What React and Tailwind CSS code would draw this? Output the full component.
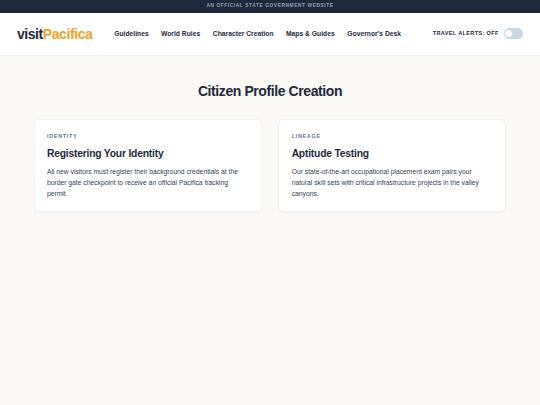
const links = [
  { label: 'Guidelines', width: 'w-[34.3px]' },
  { label: 'World Rules', width: 'w-[39.3px]' },
  { label: 'Character Creation', width: 'w-[60.7px]' },
  { label: 'Maps & Guides', width: 'w-[48.8px]' },
  { label: "Governor's Desk", width: 'w-[54px]' },
];

const cards = [
  {
    tag: 'Identity',
    title: 'Registering Your Identity',
    lines: [
      'All new visitors must register their background credentials at the',
      'border gate checkpoint to receive an official Pacifica tracking',
      'permit.',
    ],
  },
  {
    tag: 'Lineage',
    title: 'Aptitude Testing',
    lines: [
      'Our state-of-the-art occupational placement exam pairs your',
      'natural skill sets with critical infrastructure projects in the valley',
      'canyons.',
    ],
  },
];

function Card({ tag, title, lines }) {
  return (
    <article className="h-[92.5px] rounded-[5px] border border-[#f1f3f5] bg-white px-[12.2px] pt-[12px] shadow-[0_1px_2px_rgba(0,0,0,0.05)]">
      <p className="text-[5.4px] leading-[8px] font-bold tracking-[0.74px] text-[#64748b] uppercase">{tag}</p>
      <h2 className="mt-[6.4px] text-[10.3px] leading-[13px] font-bold tracking-[-0.2px]">{title}</h2>
      <p className="mt-[7.3px] text-[6.75px] leading-[10.8px] whitespace-nowrap text-[#334155]">
        {lines.map((line) => (
          <span key={line} className="block">{line}</span>
        ))}
      </p>
    </article>
  );
}

export default function App() {
  return (
    <div className="flex h-screen flex-col overflow-hidden bg-[#faf9f5] font-['Liberation_Sans',Arial,sans-serif] text-[#1e293b]">
      <div className="flex h-[12.66px] shrink-0 items-center justify-center bg-[#1e293b] pt-[1px] text-[4.8px] leading-none font-bold tracking-[0.6px] text-[#94a3b8] uppercase">
        An Official State Government Website
      </div>
      <header className="flex h-[43px] shrink-0 items-center border-b border-[#eef0f2] bg-white px-[16.9px]">
        <div className="w-[97.3px] text-[14px] leading-none font-bold tracking-[-0.42px]">
          visit<span className="text-[#f0a328]">Pacifica</span>
        </div>
        <nav className="flex gap-[12.5px] text-[6.75px] font-bold whitespace-nowrap">
          {links.map(({ label, width }) => (
            <a key={label} className={width}>{label}</a>
          ))}
        </nav>
        <div className="ml-auto flex items-center gap-[5px]">
          <span className="text-[5.5px] leading-none font-bold tracking-[0.38px] whitespace-nowrap uppercase">Travel Alerts: Off</span>
          <button className="flex h-[10.5px] w-[19.4px] items-center rounded-full bg-[#cbd5e1] px-[1.5px]" aria-label="Travel alerts">
            <span className="size-[7px] rounded-full bg-white" />
          </button>
        </div>
      </header>
      <main className="px-[33.75px] pt-[26.5px]">
        <h1 className="text-center text-[14px] leading-[18px] font-bold tracking-[-0.41px]">Citizen Profile Creation</h1>
        <section className="mt-[19.2px] grid grid-cols-2 gap-[16.9px]">
          {cards.map((card) => (
            <Card key={card.tag} {...card} />
          ))}
        </section>
      </main>
    </div>
  );
}
